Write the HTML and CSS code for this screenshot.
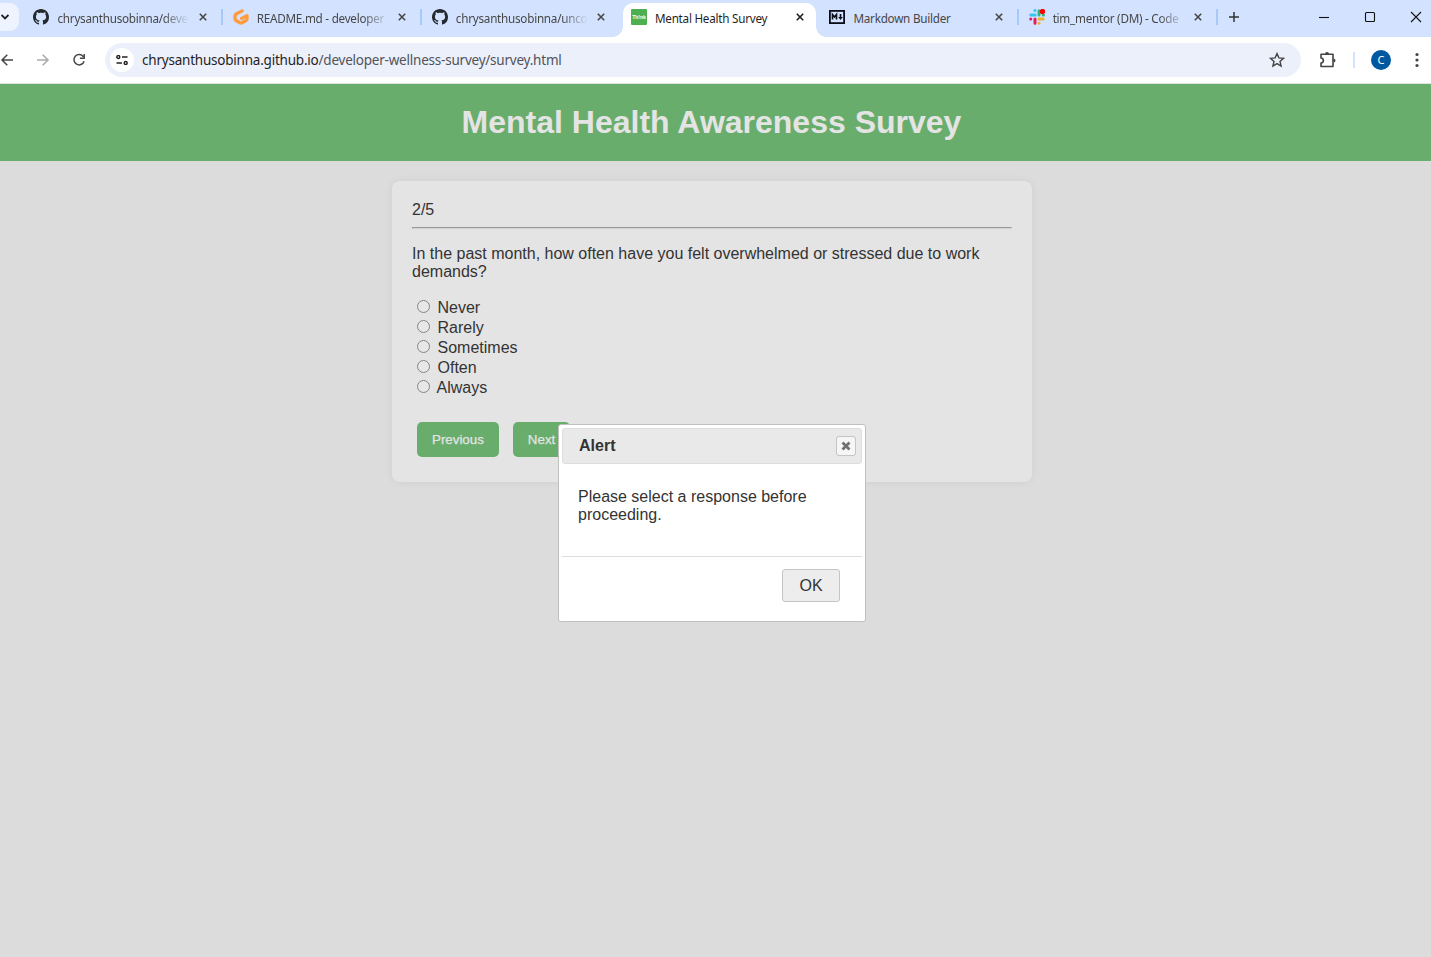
FILE: index.html
```html
<!DOCTYPE html>
<html lang="en">
<head>
<meta charset="utf-8">
<title>Mental Health Survey</title>
<link rel="stylesheet" href="styles.css">
</head>
<body>
<svg width="0" height="0" class="defs">
  <symbol id="github" viewBox="0 0 16 16"><path fill="#24292f" d="M8 0C3.58 0 0 3.58 0 8c0 3.54 2.29 6.53 5.47 7.59.4.07.55-.17.55-.38 0-.19-.01-.82-.01-1.49-2.01.37-2.53-.49-2.69-.94-.09-.23-.48-.94-.82-1.13-.28-.15-.68-.52-.01-.53.63-.01 1.08.58 1.23.82.72 1.21 1.87.87 2.33.66.07-.52.28-.87.51-1.07-1.78-.2-3.64-.89-3.64-3.95 0-.87.31-1.59.82-2.15-.08-.2-.36-1.02.08-2.12 0 0 .67-.21 2.2.82.64-.18 1.32-.27 2-.27s1.36.09 2 .27c1.53-1.04 2.2-.82 2.2-.82.44 1.1.16 1.92.08 2.12.51.56.82 1.27.82 2.15 0 3.07-1.87 3.75-3.65 3.95.29.25.54.73.54 1.48 0 1.07-.01 1.93-.01 2.2 0 .21.15.46.55.38A8.01 8.01 0 0 0 16 8c0-4.42-3.58-8-8-8z"/></symbol>
  <symbol id="close" viewBox="0 0 8 8"><path d="M.8.8l6.4 6.4M7.2.8L.8 7.2" fill="none" stroke="currentColor" stroke-width="1.6"/></symbol>
</svg>
<div class="tabstrip">
  <div class="tab-search"><svg width="8" height="6" viewBox="0 0 8 6"><path d="M.5 1L4 4.5 7.500 1" fill="none" stroke="#1f1f1f" stroke-width="1.800"/></svg></div>
  <div class="tabs">
    <div class="tab tab-line"><svg class="favicon"><use href="#github"/></svg><span class="tab-title fade">chrysanthusobinna/deve</span><svg class="close"><use href="#close"/></svg></div>
    <div class="tab tab-line"><svg class="favicon" viewBox="0 0 16 16"><path d="M9.200 1.900L3.200 5Q2 5.700 2 7v2.800q0 1.100 1 1.700l4 2.300q1 .5 2 0l4-2.300q1-.6 1-1.700V6.600L8.600 9.400" fill="none" stroke="#ff9a3d" stroke-width="3.300" stroke-linecap="round" stroke-linejoin="round"/></svg><span class="tab-title fade">README.md - developer</span><svg class="close"><use href="#close"/></svg></div>
    <div class="tab"><svg class="favicon"><use href="#github"/></svg><span class="tab-title fade">chrysanthusobinna/unco</span><svg class="close"><use href="#close"/></svg></div>
    <div class="tab active"><span class="favicon think">Th!nk</span><span class="tab-title">Mental Health Survey</span><svg class="close"><use href="#close"/></svg></div>
    <div class="tab tab-line"><svg class="favicon" viewBox="0 0 16 16"><rect x=".9" y="1.900" width="14.200" height="12.200" fill="none" stroke="#0b0d18" stroke-width="1.800"/><path d="M3.500 10.500v-5l2 2.500 2-2.500v5M11.500 5v4" fill="none" stroke="#0b0d18" stroke-width="1.600"/><path d="M9.200 8h4.600l-2.300 3z" fill="#0b0d18"/></svg><span class="tab-title">Markdown Builder</span><svg class="close"><use href="#close"/></svg></div>
    <div class="tab tab-line"><svg class="favicon" viewBox="0 0 16 16" fill="none" stroke-width="3" stroke-linecap="round"><path stroke="#36c5f0" d="M1.800 5.900h4.400M5.900 1.600h.1"/><path stroke="#2eb67d" d="M10 1.800v4.300M14.300 6h.1"/><path stroke="#ecb22e" d="M10 10h4.200M10 14.200h.1"/><path stroke="#e01e5a" d="M6 10v4.200M1.700 10h.1"/><circle cx="13.500" cy="2.500" r="2.700" fill="#f00"/></svg><span class="tab-title fade">tim_mentor (DM) - Code</span><svg class="close"><use href="#close"/></svg></div>
  </div>
  <svg class="new-tab" width="10" height="10" viewBox="0 0 10 10"><path d="M5 0v10M0 5h10" stroke="#333" stroke-width="1.500"/></svg>
  <div class="window-controls">
    <svg viewBox="0 0 10 10"><path d="M0 5.500h10"/></svg>
    <svg viewBox="0 0 10 10"><rect x=".5" y=".5" width="9" height="9" rx="1"/></svg>
    <svg viewBox="0 0 10 10"><path d="M0 0l10 10M10 0L0 10"/></svg>
  </div>
</div>
<div class="toolbar">
  <svg class="nav back" viewBox="0 0 12 12"><path d="M12 6H1M6.300 .7L1 6l5.300 5.300"/></svg>
  <svg class="nav forward" viewBox="0 0 12 12"><path d="M0 6h11M5.700 .7L11 6l-5.300 5.300"/></svg>
  <svg class="nav reload" viewBox="0 0 12 12"><path d="M10.400 2.700A5.200 5.200 0 1 0 11.100 7.200M11.200 0v4.300H6.900"/></svg>
  <div class="omnibox">
    <span class="site-info"><svg width="12" height="10" viewBox="0 0 12 10" fill="none" stroke="#222" stroke-width="1.400"><circle cx="2.300" cy="2" r="1.500"/><path d="M6 2h5.500M.5 8H6"/><circle cx="9.700" cy="8" r="1.500"/></svg></span>
    <span class="url">chrysanthusobinna.github.io<span class="path">/developer-wellness-survey/survey.html</span></span>
    <svg class="star" width="16" height="16" viewBox="0 0 16 16"><path d="M8 1.600l1.900 4.300 4.700.4-3.600 3.100 1.100 4.600L8 11.600 3.900 14 5 9.400 1.400 6.300l4.700-.4z" fill="none" stroke="#444" stroke-width="1.400"/></svg>
  </div>
  <svg class="extensions" width="18" height="18" viewBox="0 0 18 18"><path d="M2 3.200h12v12.300H2v-3.500c3.200-.4 3.200-4.600 0-5z" fill="none" stroke="#444" stroke-width="1.600" stroke-linejoin="round"/><path d="M6 3a2 2 0 0 1 4 0zM14.500 7.500a2 2 0 0 1 0 4z" fill="#444"/></svg>
  <span class="divider"></span>
  <span class="avatar">C</span>
  <svg class="menu" width="4" height="16" viewBox="0 0 4 16" fill="#444"><circle cx="2" cy="2.500" r="1.600"/><circle cx="2" cy="8" r="1.600"/><circle cx="2" cy="13.500" r="1.600"/></svg>
</div>
<header class="banner"><h1>Mental Health Awareness Survey</h1></header>
<main class="card">
  <div class="progress">2/5</div>
  <hr class="rule">
  <p class="question">In the past month, how often have you felt overwhelmed or stressed due to work demands?</p>
  <div class="options">
    <label><input type="radio" name="answer">Never</label>
    <label><input type="radio" name="answer">Rarely</label>
    <label><input type="radio" name="answer">Sometimes</label>
    <label><input type="radio" name="answer">Often</label>
    <label class="last"><input type="radio" name="answer">Always</label>
  </div>
  <div class="actions"><button class="step">Previous</button><button class="step">Next</button></div>
</main>
<div class="dialog" role="alertdialog">
  <div class="dialog-title"><span>Alert</span><button class="dialog-close"><svg width="10" height="10" viewBox="0 0 10 10"><path d="M1.500 1.500l7 7M8.500 1.500l-7 7" stroke="#707070" stroke-width="2.800"/></svg></button></div>
  <p class="dialog-text">Please select a response before proceeding.</p>
  <div class="dialog-footer"><button class="ok">OK</button></div>
</div>
</body>
</html>
```
FILE: styles.css
```css
* { box-sizing: border-box; }
body { margin: 0; height: 957px; overflow: hidden; background: #dcdcdc; color: #333; font: 16px/18px "Liberation Sans", Arial, sans-serif; }
button { font-family: inherit; }
.defs { position: absolute; }
.tabstrip { display: flex; height: 37px; background: #d3e2fe; font: 11.700px/18px "Noto Sans", sans-serif; }
.tab-search { flex: none; width: 19px; height: 28px; margin: 3px 4.800px 0 0; padding-left: 1px; background: #edf3ff; border-radius: 0 9px 9px 0; display: flex; align-items: center; }
.tabs { display: flex; flex: none; }
.tab { width: 199.200px; height: 37px; display: flex; align-items: center; padding: 0 16px 3px 9.700px; color: #474747; position: relative; }
.tab-line::after { content: ""; position: absolute; right: 0; top: 9px; width: 2px; height: 16px; background: #a8c7fa; }
.favicon { width: 16px; height: 16px; flex: none; margin-right: 8px; }
.tab-title { width: 132px; padding-top: 2px; flex: none; white-space: nowrap; letter-spacing: -.25px; }
.fade { -webkit-mask-image: linear-gradient(90deg, #000 106px, transparent 132px); mask-image: linear-gradient(90deg, #000 106px, transparent 132px); }
.close { width: 8px; height: 8px; flex: none; margin-left: auto; }
.active { width: 193px; height: 37px; margin: 0 3.800px 0 1.600px; padding: 0 12px 3px 8px; color: #1f1f1f; }
.active::before { content: ""; position: absolute; z-index: 0; inset: 3px 0 0; background: #fff; border-radius: 10px 10px 0 0; }
.active::after { content: ""; position: absolute; left: -10px; right: -10px; bottom: 0; height: 10px; background: radial-gradient(circle at 0 0, transparent 9.500px, #fff 10px) left / 10px 10px no-repeat, radial-gradient(circle at 100% 0, transparent 9.500px, #fff 10px) right / 10px 10px no-repeat; }
.active > * { position: relative; z-index: 1; }
.think { display: grid; place-items: center; background: #4caf50; border-radius: 1px; color: #fff; font: bold 5px/16px "Liberation Sans", sans-serif; }
.new-tab { margin: 12px 0 0 11px; }
.window-controls { display: flex; gap: 36px; margin: 12px 10px 0 auto; }
.window-controls svg { width: 10px; height: 10px; overflow: visible; fill: none; stroke: #111; stroke-width: 1.100px; }
.toolbar { height: 47px; background: #fff; display: flex; align-items: center; border-bottom: 1px solid #e1e5e1; }
.nav { width: 12px; height: 12px; fill: none; stroke: #474747; stroke-width: 1.500px; flex: none; overflow: visible; }
.back { margin-left: 1px; }
.forward { margin-left: 24px; stroke: #aaa; }
.reload { margin-left: 24px; }
.omnibox { width: 1196px; height: 34px; margin-left: 20px; background: #ecf0fa; border-radius: 17px; display: flex; align-items: center; flex: none; }
.site-info { width: 24px; height: 24px; margin-left: 5px; border-radius: 50%; background: #fff; display: grid; place-items: center; }
.url { margin-left: 8px; font: 13.500px/20px "Noto Sans", sans-serif; letter-spacing: -.22px; color: #1f1f1f; white-space: nowrap; }
.path { color: #50535a; }
.star { margin: 0 16px 0 auto; }
.extensions { margin-left: 18px; }
.divider { width: 2px; height: 16px; margin-left: 16px; background: #d3e3fd; }
.avatar { width: 20px; height: 20px; margin-left: 16px; border-radius: 50%; background: #0058a0; color: #fff; font: 11px/20px "Noto Sans", sans-serif; text-align: center; }
.menu { margin-left: 24px; }
.banner { height: 77px; background: #69ad6c; padding-right: 8px; }
.banner h1 { margin: 0; padding-top: 20px; font-size: 32px; line-height: 37px; text-align: center; color: #e4e4e4; }
.card { width: 640px; height: 301px; margin: 20px 0 0 392px; padding: 20px; background: #e4e4e4; border-radius: 8px; box-shadow: 0 0 10px rgba(0,0,0,.06); }
.rule { margin: 8px 0 16px; border: 1px solid; border-color: #999 #d5d5d5 #d5d5d5 #999; }
.question { margin: 0; }
.options { margin-top: 17px; }
.options label { display: flex; align-items: center; height: 20px; }
.options input { appearance: none; width: 13px; height: 13px; margin: 0 7.500px 3px 5px; border: 1px solid #858585; border-radius: 50%; background: #e7e7e7; }
.options .last input { margin-right: 6.500px; }
.actions { display: flex; gap: 14px; padding: 24px 5px 0; }
.step { height: 35px; padding: 0 15px; border: 0; border-radius: 5px; background: #69ad6c; color: #e4e4e4; font-size: 13.333px; -webkit-text-stroke: .25px #e4e4e4; }
.dialog { position: absolute; left: 558px; top: 424px; width: 308px; height: 198px; padding: 3px; background: #fff; border: 1px solid #c0c0c0; border-radius: 3px; }
.dialog-title { height: 36px; padding: 0 5px 0 16px; display: flex; align-items: center; justify-content: space-between; background: #e9e9e9; border: 1px solid #ddd; border-radius: 3px; font-weight: bold; }
.dialog-close { width: 20px; height: 20px; padding: 0; background: #f6f6f6; border: 1px solid #c5c5c5; border-radius: 3px; display: grid; place-items: center; }
.dialog-text { margin: 0; padding: 24px 16px 0; height: 92px; }
.dialog-footer { border-top: 1px solid #ddd; padding: 12px 22px 0; display: flex; justify-content: flex-end; }
.ok { width: 58px; height: 33px; padding: 0; background: #ededed; border: 1px solid #c5c5c5; border-radius: 3px; color: #333; font-size: 16px; }
```
